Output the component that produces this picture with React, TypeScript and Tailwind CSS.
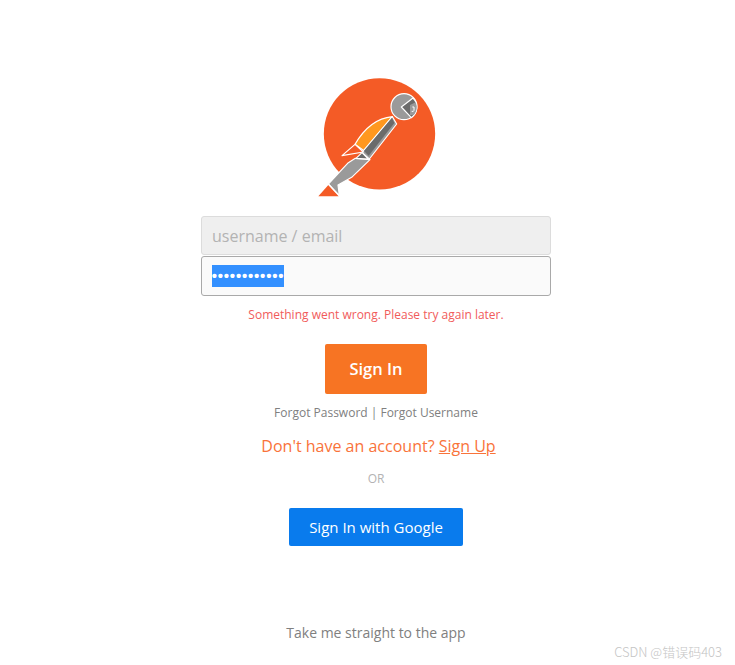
const font = "font-['Open_Sans',sans-serif]";

const Logo = () => (
  <svg width="118" height="119" viewBox="54 39 354 357" className="block">
    <circle cx="238.5" cy="206.5" r="167" fill="#f45b26" />
    <g stroke="#fff" strokeWidth="3.5" strokeLinejoin="round">
      <path d="M165 238 C190 195 225 160 277 155 L192 257 Z" fill="#ff981f" />
      <path d="M277 155 L290 177 L208 282 L186 262 Z" fill="#9a9a9a" />
      <path d="M276 158 L283 174 L206 272 L192 258 Z" fill="#6b6b6b" stroke="none" />
      <path d="M165 238 L126 272 L190 261 Z" fill="#f45b26" />
      <path d="M166 280 L210 284 L155 337 L114 360 L118 392 L85 357 L145 293 Z" fill="#9a9a9a" />
      <path d="M168 280 L186 263 L205 282 Z" fill="#6b6b6b" />
    </g>
    <path d="M85 360 L55 394 L116 394 Z" fill="#f45b26" />
    <path d="M85 357 L118 392" stroke="#fff" strokeWidth="3.5" />
    <circle cx="312" cy="125" r="39" fill="#9a9a9a" stroke="#fff" strokeWidth="3.5" />
    <path d="M304 126 L339 99 A39 39 0 0 1 334 158 Z" fill="#6b6b6b" stroke="#fff" strokeWidth="3.5" strokeLinejoin="round" />
    <path d="M330 120 L347 112 A37 37 0 0 1 342 149 L330 151 Z" fill="#9a9a9a" />
    <path d="M337 126 L342 126 L342 136 Q341 141 335 139" fill="none" stroke="#fff" strokeWidth="3" />
  </svg>
);

export default function App() {
  return (
    <div className={`relative h-[665px] bg-white ${font}`}>
      <div className="flex flex-col items-center pl-[17px] pt-[78px]">
        <div className="ml-[2px]">
          <Logo />
        </div>
        <div className="mt-[19px] flex w-[350px] flex-col gap-px">
          <input
            className="h-[39px] w-full rounded-[3px] border border-[#dcdcdc] bg-[#efefef] px-[10px] text-base outline-none placeholder:text-[#b3b3b3]"
            placeholder="username / email"
          />
          <div className="flex h-[40px] w-full items-center rounded-[3px] border border-[#a9a9a9] bg-[#fafafa] px-[10px]">
            <span className="flex h-[22px] w-[72px] items-center justify-center overflow-hidden bg-[#3390ff] font-['Liberation_Sans',sans-serif] text-[15px] font-bold tracking-[0.8px] text-white">
              ••••••••••••
            </span>
          </div>
        </div>
        <p className="mt-[10px] text-xs leading-[18px] text-[#f15b5b]">
          Something went wrong. Please try again later.
        </p>
        <button className="mt-[20px] h-[50px] w-[102px] rounded-[2px] bg-[#f77423] text-[16.5px] font-semibold text-white">
          Sign In
        </button>
        <div className="mt-[10px] text-xs leading-[18px] text-[#808080]">
          Forgot Password | Forgot Username
        </div>
        <div className="ml-[5px] mt-[13px] text-base leading-[22px] text-[#f9733a]">
          Don't have an account? <span className="underline">Sign Up</span>
        </div>
        <div className="mt-[13px] text-xs leading-[18px] text-[#b3b3b3]">OR</div>
        <button className="mt-[20px] h-[38px] w-[174px] rounded-[2px] bg-[#097bed] text-[15px] font-medium text-white">
          Sign In with Google
        </button>
        <div className="mt-[77px] text-sm leading-[20px] text-[#808080]">
          Take me straight to the app
        </div>
      </div>
      <span className="absolute right-[13px] top-[644px] font-['Noto_Sans_CJK_SC',sans-serif] text-[13px] font-light leading-4 text-[#c4c4c4]">
        CSDN @错误码403
      </span>
    </div>
  );
}
